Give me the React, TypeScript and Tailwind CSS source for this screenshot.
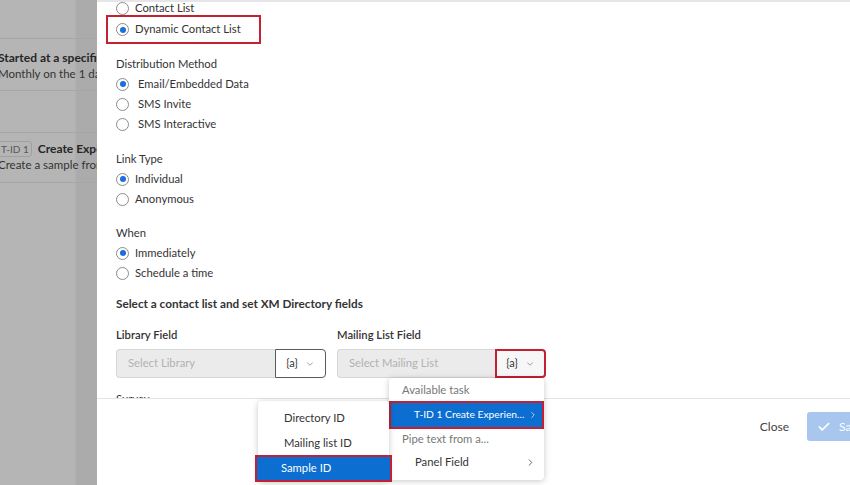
import { Check, ChevronDown, ChevronRight } from "lucide-react";

const FONT = "font-['Lato','Liberation_Sans',sans-serif]";

function Radio({ label, checked, wide }: { label: string; checked?: boolean; wide?: boolean }) {
  return (
    <div className="flex h-5 items-center">
      <span className="flex h-[13px] w-[13px] items-center justify-center rounded-full border border-[#8c8c8c] bg-white">
        {checked && <span className="h-[6px] w-[6px] rounded-full bg-[#1a6fd8]" />}
      </span>
      <span className={`${wide ? "ml-[9px]" : "ml-[6px]"} text-[11.25px] text-[#333]`}>{label}</span>
    </div>
  );
}

function Heading({ children, className = "" }: { children: React.ReactNode; className?: string }) {
  return <div className={`flex h-[18px] items-center text-[#333] ${className}`}>{children}</div>;
}

function PipeButton({ boxed }: { boxed?: boolean }) {
  return (
    <div
      className={`flex h-[29px] w-[51px] items-center justify-center gap-[7px] rounded-r-sm text-[11px] text-[#333] ${
        boxed ? "border-2 border-[#c32032] bg-[#f7f7f7]" : "border border-[#5a5a5a] bg-white"
      }`}
    >
      <span>{"{a}"}</span>
      <ChevronDown size={10} strokeWidth={1.5} className="text-[#666]" />
    </div>
  );
}

function Backdrop() {
  return (
    <div className="relative h-full w-[97px] shrink-0 overflow-hidden bg-[linear-gradient(to_right,#b5b5b5_74px,#ababab_77px)]">
      <div className="-ml-[2px] w-[300px] pt-[38px] text-[11.5px] text-[#262626]">
        <div className="border-t border-[#a6a6a6]" />
        <div className="pt-[10px] text-[12px] font-bold leading-[17px]">Started at a specific time</div>
        <div className="leading-[16px] text-[#333]">Monthly on the 1 day</div>
        <div className="mt-[8px] border-t border-[#a6a6a6]" />
        <div className="mt-[41px] border-t border-[#a6a6a6]" />
        <div className="flex items-center gap-[6px] pt-[7px] leading-[17px]">
          <span className="rounded-[3px] border border-[#a0a0a0] px-[2px] text-[10px] leading-[14px] text-[#555]">T-ID 1</span>
          <span className="text-[12px] font-bold">Create Experience</span>
        </div>
        <div className="leading-[15px] text-[#333]">Create a sample from</div>
        <div className="mt-[10px] border-t border-[#a6a6a6]" />
      </div>
    </div>
  );
}

function MenuItem({
  label,
  muted,
  chevron,
  indent,
  h,
}: {
  label: string;
  muted?: boolean;
  chevron?: boolean;
  indent?: boolean;
  h: string;
}) {
  return (
    <div
      className={`flex ${h} items-center pr-[8px] text-[11.25px] ${indent ? "pl-[26px]" : "pl-[13px]"} ${
        muted ? "text-[#777]" : "text-[#333]"
      }`}
    >
      <span className="flex-1 whitespace-nowrap">{label}</span>
      {chevron && <ChevronRight size={11} strokeWidth={1.6} className="shrink-0" />}
    </div>
  );
}

export default function App() {
  return (
    <div className={`relative flex h-[485px] w-[850px] overflow-hidden bg-white ${FONT}`}>
      <Backdrop />

      <div className="flex h-full flex-1 flex-col bg-white">
        <div className="h-[2px] bg-[#e6e6e6]" />
        <div className="flex-1 overflow-hidden pl-[19px]">
          <div className="-mt-[4px]">
            <Radio label="Contact List" />
            <div className="-ml-[10px] mt-[-3px] flex h-[29px] w-[155px] items-center border-2 border-[#c32032] pl-[8px]">
              <Radio label="Dynamic Contact List" checked />
            </div>

            <Heading className="mt-[11px] text-[11.25px]">Distribution Method</Heading>
            <div className="mt-[1px]">
              <Radio label="Email/Embedded Data" checked wide />
              <Radio label="SMS Invite" wide />
              <Radio label="SMS Interactive" wide />
            </div>

            <Heading className="mt-[16px] text-[11.25px]">Link Type</Heading>
            <div className="mt-[1px]">
              <Radio label="Individual" checked />
              <Radio label="Anonymous" />
            </div>

            <Heading className="mt-[15px] text-[11.25px]">When</Heading>
            <div className="mt-[1px]">
              <Radio label="Immediately" checked />
              <Radio label="Schedule a time" />
            </div>

            <Heading className="mt-[12px] text-[11.75px] font-bold">Select a contact list and set XM Directory fields</Heading>

            <div className="mt-[13px] flex gap-[11px]">
              <div>
                <Heading className="text-[11.25px] font-semibold">Library Field</Heading>
                <div className="mt-[5px] flex">
                  <div className="flex h-[29px] w-[159px] items-center rounded-l-sm border border-r-0 border-[#d6d6d6] bg-[#ebebeb] pl-[11px] text-[11.25px] text-[#b2b2b2]">
                    Select Library
                  </div>
                  <PipeButton />
                </div>
              </div>
              <div>
                <Heading className="text-[11.25px] font-semibold">Mailing List Field</Heading>
                <div className="mt-[5px] flex">
                  <div className="flex h-[29px] w-[158px] items-center rounded-l-sm border border-r-0 border-[#d6d6d6] bg-[#ebebeb] pl-[11px] text-[11.25px] text-[#b2b2b2]">
                    Select Mailing List
                  </div>
                  <PipeButton boxed />
                </div>
              </div>
            </div>

            <Heading className="mt-[12px] text-[11.25px]">Survey</Heading>
          </div>
        </div>

        <div className="flex h-[87px] shrink-0 items-start justify-end gap-[18px] overflow-hidden border-t border-[#e4e4e4] pt-[13px]">
          <span className="mt-[6px] text-[12px] text-[#444]">Close</span>
          <div className="-mr-[17px] flex h-[29px] w-[60px] shrink-0 items-center gap-[8px] rounded-l-[3px] bg-[#a8c6ee] pl-[10px] text-[12px] text-white">
            <Check size={14} strokeWidth={3} />
            <span>Save</span>
          </div>
        </div>
      </div>

      {/* pipe text menu */}
      <div className="absolute left-[389px] top-[378px] w-[155px] rounded-sm bg-white pb-[5px] shadow-[0_1px_6px_rgba(0,0,0,0.22)]">
        <div className="flex h-[24px] items-center pl-[13px] text-[11.25px] text-[#777]">Available task</div>
        <div className="-mt-[1px] border-2 border-[#c32032]">
          <div className="flex h-[24px] items-center justify-between bg-[#0b6ed0] pl-[23px] pr-[4px] text-[10.25px] text-white">
            <span className="whitespace-nowrap">T-ID 1 Create Experien...</span>
            <ChevronRight size={10} strokeWidth={1.6} className="shrink-0" />
          </div>
        </div>
        <MenuItem label="Pipe text from a..." muted h="h-[20px]" />
        <MenuItem label="Panel Field" chevron indent h="h-[26px]" />
      </div>

      {/* sub menu */}
      <div className="absolute left-[258px] top-[401px] w-[131px] rounded-sm bg-white pt-[5px] shadow-[0_1px_6px_rgba(0,0,0,0.22)]">
        <MenuItem label="Directory ID" indent h="h-[25px]" />
        <MenuItem label="Mailing list ID" indent h="h-[24px]" />
        <div className="-mx-[3px] border-2 border-[#c32032]">
          <div className="flex h-[23px] items-center bg-[#0b6ed0] pl-[24px] text-[11.25px] text-white">Sample ID</div>
        </div>
      </div>
    </div>
  );
}
